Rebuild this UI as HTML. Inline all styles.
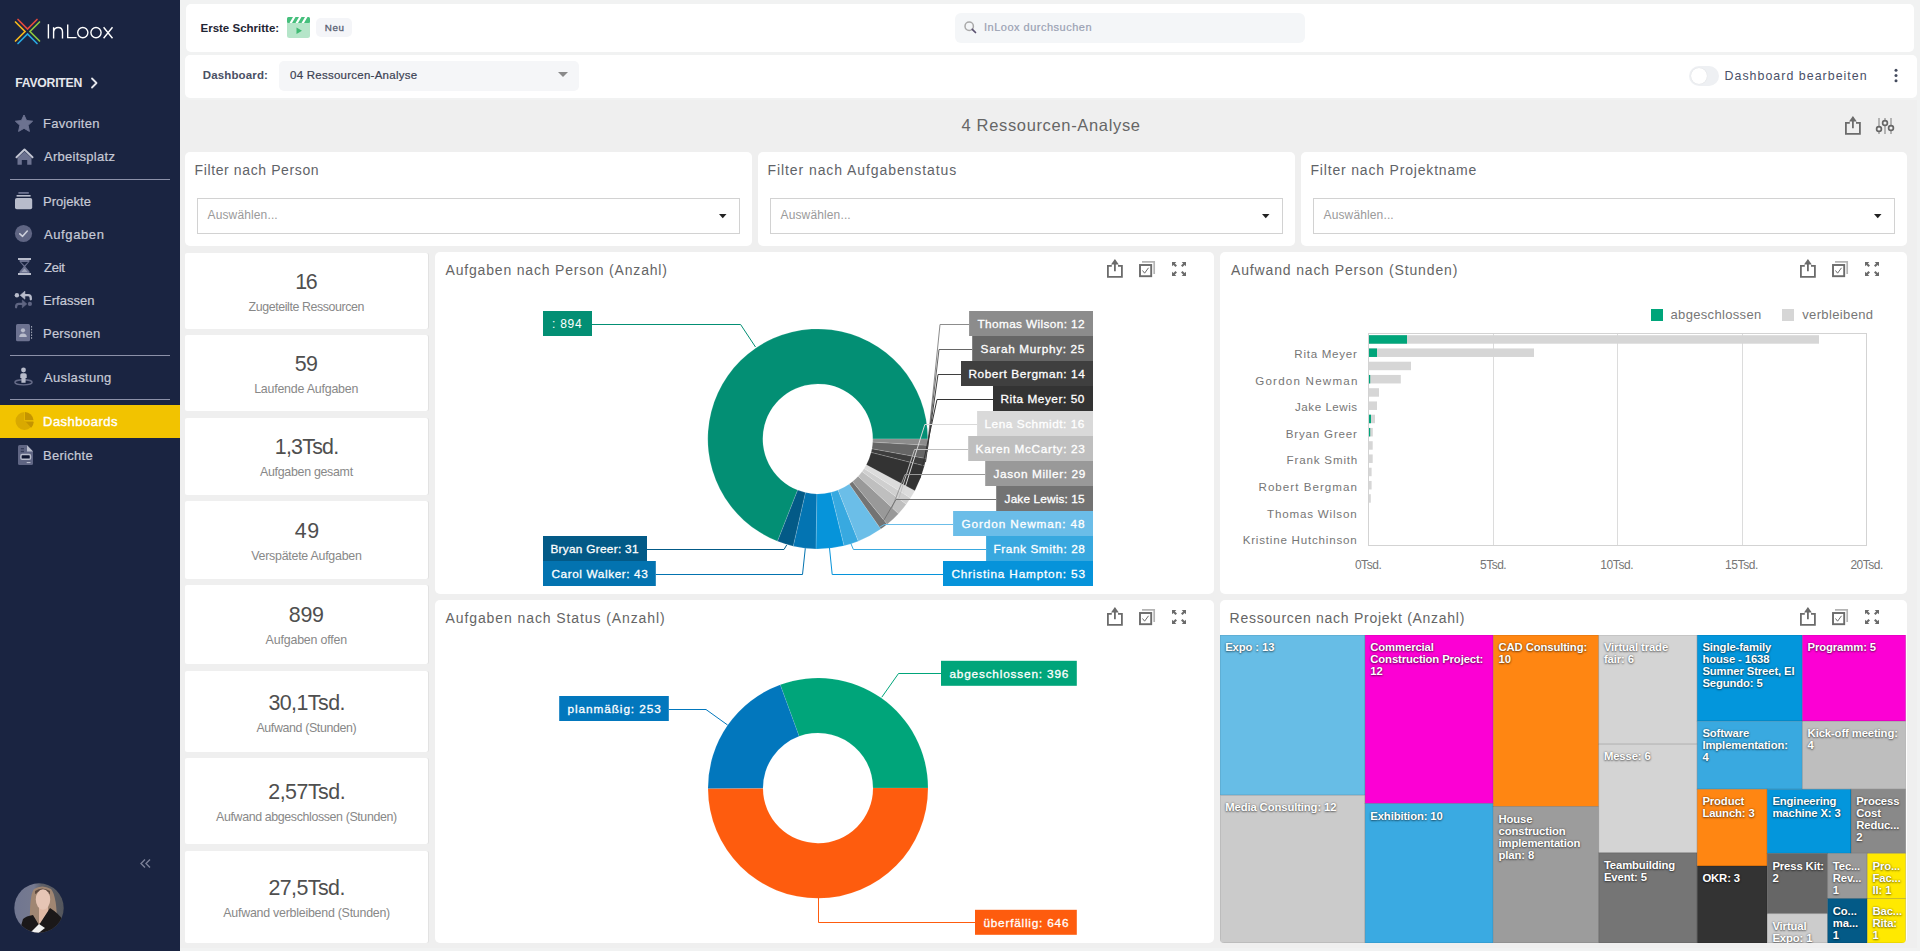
<!DOCTYPE html>
<html><head><meta charset="utf-8"><title>InLoox Dashboard</title>
<style>
html,body{margin:0;padding:0;}
body{width:1920px;height:951px;overflow:hidden;position:relative;background:#efefef;font-family:"Liberation Sans",sans-serif;}
svg{position:absolute;overflow:visible}
</style></head><body>
<div style="position:absolute;left:0px;top:0px;width:180px;height:951px;background:#1a2441;border-radius:0px;"></div>
<div style="position:absolute;left:180px;top:0px;width:1740px;height:100px;background:#f1f2f2;border-radius:0px;"></div>
<div style="position:absolute;left:1917px;top:0px;width:3px;height:951px;background:#f1f2f2;border-radius:0px;"></div>
<div style="position:absolute;left:180px;top:948px;width:1740px;height:3px;background:#f1f2f2;border-radius:0px;"></div>
<svg style="left:0;top:0" width="60" height="60" viewBox="0 0 60 60">
<g fill="none" stroke-width="1.7" stroke-linecap="round">
<polyline points="18,19.5 27.5,29 37,19.5" stroke="#e5493d"/>
<polyline points="15.5,22 25,31.5 15.5,41" stroke="#f5b81c"/>
<polyline points="39.5,22 30,31.5 39.5,41" stroke="#8dc63f"/>
<polyline points="18,43.5 27.5,34 37,43.5" stroke="#29a8e0"/>
</g></svg>
<svg style="left:0;top:0" width="130" height="50"><g fill="none" stroke="#ffffff" stroke-width="1.4" stroke-linecap="butt">
<line x1="48.4" y1="24.2" x2="48.4" y2="38.5"/>
<path d="M53.6,38.5 L53.6,27.2 M53.6,31.5 Q54.5,27.5 58.1,27.5 Q62.5,27.5 62.5,32 L62.5,38.5"/>
<path d="M67.7,24.4 L67.7,37.6 L76.6,37.6"/>
<circle cx="82.8" cy="32.6" r="5.1"/>
<circle cx="96" cy="32.6" r="5.1"/>
<path d="M103.6,27.2 L112.5,38.2 M112.5,27.2 L103.6,38.2"/>
</g></svg>
<svg style="left:0;top:0" width="120" height="100"><polyline points="92,78.5 96.5,83 92,87.5" fill="none" stroke="#e6e7ec" stroke-width="1.8" stroke-linecap="round" stroke-linejoin="round"/></svg>
<div style="position:absolute;left:0px;top:405px;width:180px;height:33px;background:#f2c300;border-radius:0px;"></div>
<div style="position:absolute;left:10px;top:179px;width:160px;height:1px;background:#8c91a9;border-radius:0px;"></div>
<div style="position:absolute;left:10px;top:355px;width:160px;height:1px;background:#8c91a9;border-radius:0px;"></div>
<div style="position:absolute;left:10px;top:399px;width:160px;height:1px;background:#8c91a9;border-radius:0px;"></div>
<svg style="left:0;top:0" width="180" height="480">
<!-- star -->
<path d="M24,115 L26.6,120.6 L32.6,121.2 L28.1,125.3 L29.4,131.4 L24,128.3 L18.6,131.4 L19.9,125.3 L15.4,121.2 L21.4,120.6 Z" fill="#6c7290" stroke="#6c7290" stroke-width="1" stroke-linejoin="round"/>
<!-- home -->
<path d="M16.5,157.2 L24.5,149.5 L32.5,157.2" fill="none" stroke="#c3c6d3" stroke-width="2" stroke-linecap="round" stroke-linejoin="round"/>
<path d="M17.5,158 L24.5,151.5 L31.5,158 L31.5,164.8 L27.2,164.8 L27.2,160 L21.8,160 L21.8,164.8 L17.5,164.8 Z" fill="#6c7290"/>
<!-- projekte -->
<rect x="15" y="198" width="17.2" height="11.3" rx="1.8" fill="#b8bccb"/>
<rect x="16.6" y="195" width="14" height="1.6" fill="#b8bccb"/>
<rect x="18.4" y="192" width="10.4" height="1.8" fill="#6c7290"/>
<!-- aufgaben -->
<circle cx="23.5" cy="233.5" r="8.6" fill="#5f6583"/>
<polyline points="19.8,233.8 22.6,236.3 27.3,231" fill="none" stroke="#cdd0db" stroke-width="1.6" stroke-linecap="round" stroke-linejoin="round"/>
<!-- zeit -->
<rect x="18" y="258" width="13" height="2" fill="#b8bccb"/>
<rect x="18" y="273" width="13" height="2" fill="#b8bccb"/>
<path d="M19.5,260 L29.5,260 L29.5,261.5 L25.3,266.5 L29.5,271.5 L29.5,273 L19.5,273 L19.5,271.5 L23.7,266.5 L19.5,261.5 Z" fill="#6c7290"/>
<path d="M21,262 L28,262 L24.5,265.5 Z" fill="#1a2441"/>
<path d="M21.3,272 L27.7,272 L24.5,268.5 Z" fill="#9ba0b6"/>
<!-- erfassen -->
<circle cx="16.9" cy="295.3" r="2.2" fill="#b8bccb"/>
<path d="M23.5,295.2 L28.2,295.2 Q30.8,295.2 30.8,298.2 L30.8,299.3" fill="none" stroke="#b8bccb" stroke-width="2.3" stroke-linecap="round"/>
<path d="M20.2,295.2 L24.9,291.2 L24.9,299.2 Z" fill="#b8bccb" stroke="#b8bccb" stroke-width="0.6" stroke-linejoin="round"/>
<circle cx="29.9" cy="303.9" r="2.1" fill="#5f6582"/>
<path d="M23.3,303.9 L18.8,303.9 Q16.1,303.9 16.1,306.7 L16.1,307.3" fill="none" stroke="#5f6582" stroke-width="2.3" stroke-linecap="round"/>
<path d="M26.8,303.9 L22.3,300 L22.3,307.8 Z" fill="#5f6582" stroke="#5f6582" stroke-width="0.6" stroke-linejoin="round"/>
<!-- personen -->
<rect x="16" y="324" width="14" height="17.2" rx="1.5" fill="#6c7290"/>
<circle cx="23" cy="330.3" r="2.1" fill="#b8bccb"/>
<path d="M19.2,337 Q19.2,333.5 23,333.5 Q26.8,333.5 26.8,337 Z" fill="#b8bccb"/>
<line x1="31.6" y1="326" x2="31.6" y2="339.5" stroke="#b8bccb" stroke-width="0.9" stroke-dasharray="1.6,1.2"/>
<!-- auslastung -->
<ellipse cx="23.5" cy="382.3" rx="8.6" ry="2.6" fill="none" stroke="#676c89" stroke-width="1.4"/>
<circle cx="23.5" cy="370" r="2.4" fill="#b8bccb"/>
<path d="M20.3,375 Q20.3,373.2 22.1,373.2 L24.9,373.2 Q26.7,373.2 26.7,375 L26.7,378 L25.6,378 L25.6,382.8 L21.4,382.8 L21.4,378 L20.3,378 Z" fill="#b8bccb"/>
<!-- dashboards pie -->
<path d="M24.5,414 L24.5,421 L33.5,421 A9,9 0 1 1 24.5,412" fill="#d9a900" />
<path d="M25,412 A9,9 0 0 1 33.5,420.3 L25,420.3 Z" fill="#c49400"/>
<path d="M26,422 L33.7,422 A9,9 0 0 1 31.2,427.8 Z" fill="#c49400"/>
<!-- berichte -->
<path d="M19.6,445 L27,445 L33,451.3 L33,463.5 Q33,465 31.5,465 L19.6,465 Q18,465 18,463.5 L18,446.6 Q18,445 19.6,445 Z" fill="#5f6583"/>
<path d="M27,445.2 L33,451.5 L27,451.5 Z" fill="#b8bccb"/>
<rect x="20.8" y="448" width="3.2" height="1.4" fill="#1a2441" opacity="0.6"/>
<rect x="20.8" y="450.8" width="3.2" height="1.4" fill="#1a2441" opacity="0.6"/>
<rect x="20.9" y="454.5" width="9.6" height="4.8" rx="1.4" fill="#0f1631" stroke="#b8bccb" stroke-width="1.5"/>
<rect x="26.7" y="462" width="3.8" height="1.1" fill="#b8bccb"/>
</svg>
<svg style="left:0;top:840" width="180" height="40"><g fill="none" stroke="#7b8097" stroke-width="1.4"><polyline points="145,19.5 141,23.5 145,27.5"/><polyline points="150,19.5 146,23.5 150,27.5"/></g></svg>
<svg style="left:14px;top:883px" width="50" height="50" viewBox="0 0 50 50">
<defs><clipPath id="avc"><circle cx="25" cy="25" r="24.7"/></clipPath>
<linearGradient id="avbg" x1="0" x2="1" y1="0" y2="0"><stop offset="0" stop-color="#707690"/><stop offset="0.4" stop-color="#767a90"/><stop offset="0.55" stop-color="#5e6068"/><stop offset="1" stop-color="#54565c"/></linearGradient></defs>
<g clip-path="url(#avc)">
<rect width="50" height="50" fill="url(#avbg)"/>
<path d="M16,46 Q15,12 20,6 Q28,1 37,6 Q43,13 43,42 L16,46 Z" fill="#a08672"/>
<path d="M21,8 Q28,3 36,8 L36,11 Q28,7 21,11 Z" fill="#5e4a40"/>
<rect x="25" y="24" width="9" height="16" fill="#dfb8a4"/>
<ellipse cx="29" cy="16.5" rx="7.2" ry="10.3" fill="#e6c5b5"/>
<path d="M5,50 L9,36 Q12,33 19,32 L25,42 L36,25 Q44,30 50,38 L50,50 Z" fill="#1b1819"/>
<path d="M16,50 L25,41 L31,45 L22,52 Z" fill="#f0f0f0"/>
</g></svg>
<div style="position:absolute;left:186px;top:4px;width:1728px;height:48px;background:#ffffff;border-radius:5px;"></div>
<div style="position:absolute;left:185px;top:55px;width:1732px;height:43px;background:#ffffff;border-radius:5px;"></div>
<svg style="left:287px;top:17px" width="24" height="22" viewBox="0 0 24 22">
<rect x="0" y="0" width="23" height="21" rx="2.5" fill="#b5e5c9"/>
<rect x="0" y="0" width="23" height="6" rx="1.5" fill="#45bf7c"/>
<path d="M2.5,6 L6,0 L8.5,0 L5,6 Z M8.5,6 L12,0 L14.5,0 L11,6 Z M14.5,6 L18,0 L20.5,0 L17,6 Z" fill="#ffffff"/>
<path d="M9.5,10.5 L15,13.7 L9.5,17 Z" fill="#3fba73"/>
</svg>
<div style="position:absolute;left:316px;top:18px;width:36px;height:19px;background:#f4f5f8;border-radius:5px;"></div>
<div style="position:absolute;left:955px;top:13px;width:350px;height:30px;background:#f4f6f8;border-radius:6px;"></div>
<svg style="left:960px;top:17px" width="22" height="22"><circle cx="9.2" cy="9.2" r="4.2" fill="none" stroke="#a9a9a9" stroke-width="1.5"/><line x1="12.3" y1="12.3" x2="15.5" y2="15.5" stroke="#5a5170" stroke-width="1.7" stroke-linecap="round"/></svg>
<div style="position:absolute;left:279px;top:61px;width:300px;height:30px;background:#f5f6f8;border-radius:5px;"></div>
<svg style="left:550px;top:65px" width="30" height="20"><path d="M8,7 L18,7 L13,12 Z" fill="#8a8a8a"/></svg>
<div style="position:absolute;left:1689px;top:66px;width:30px;height:20px;background:#eef0f3;border-radius:10px;"></div>
<div style="position:absolute;left:1691px;top:68px;width:16px;height:16px;border-radius:8px;background:#fff;box-shadow:0 0 1px rgba(0,0,0,0.15)"></div>
<svg style="left:1890px;top:65px" width="12" height="20"><circle cx="6" cy="5.2" r="1.5" fill="#444b5e"/><circle cx="6" cy="10.5" r="1.5" fill="#444b5e"/><circle cx="6" cy="15.8" r="1.5" fill="#444b5e"/></svg>
<svg style="left:1843px;top:113px" width="22" height="24" viewBox="0 0 22 24"><g fill="none" stroke="#6b6b6b" stroke-width="1.8">
<polyline points="6.8,9.9 2.9,9.9 2.9,20.9 16.9,20.9 16.9,9.9 13,9.9"/><line x1="9.9" y1="4.5" x2="9.9" y2="15.2"/></g>
<path d="M6,8.5 L9.9,3 L13.8,8.5 Z" fill="#6b6b6b"/></svg>
<svg style="left:1870px;top:110px" width="30" height="30"><g stroke="#a5a5a5" stroke-width="1.6"><line x1="9" y1="8" x2="9" y2="24"/><line x1="15" y1="8" x2="15" y2="24"/><line x1="21" y1="8" x2="21" y2="24"/></g>
<g fill="#f0f0f0" stroke="#666" stroke-width="1.7"><circle cx="9" cy="19" r="2.4"/><circle cx="15" cy="13" r="2.4"/><circle cx="21" cy="18" r="2.4"/></g></svg>
<div style="position:absolute;left:185px;top:152px;width:567px;height:93.5px;background:#ffffff;border-radius:5px;"></div>
<div style="position:absolute;left:197px;top:198px;width:541px;height:34px;border:1px solid #d2d2d2;background:#fff"></div>
<svg style="left:716px;top:208px" width="16" height="16"><path d="M3,6 L10.5,6 L6.75,10.3 Z" fill="#222"/></svg>
<div style="position:absolute;left:758px;top:152px;width:537px;height:93.5px;background:#ffffff;border-radius:5px;"></div>
<div style="position:absolute;left:770px;top:198px;width:510.5px;height:34px;border:1px solid #d2d2d2;background:#fff"></div>
<svg style="left:1258.5px;top:208px" width="16" height="16"><path d="M3,6 L10.5,6 L6.75,10.3 Z" fill="#222"/></svg>
<div style="position:absolute;left:1301px;top:152px;width:606px;height:93.5px;background:#ffffff;border-radius:5px;"></div>
<div style="position:absolute;left:1313px;top:198px;width:579.5px;height:34px;border:1px solid #d2d2d2;background:#fff"></div>
<svg style="left:1870.5px;top:208px" width="16" height="16"><path d="M3,6 L10.5,6 L6.75,10.3 Z" fill="#222"/></svg>
<div style="position:absolute;left:185px;top:253px;width:243px;height:76px;background:#ffffff;border-radius:2px;box-shadow:1px 0 0 #e2e2e2;"></div>
<div style="position:absolute;left:185px;top:335px;width:243px;height:76px;background:#ffffff;border-radius:2px;box-shadow:1px 0 0 #e2e2e2;"></div>
<div style="position:absolute;left:185px;top:418px;width:243px;height:76.5px;background:#ffffff;border-radius:2px;box-shadow:1px 0 0 #e2e2e2;"></div>
<div style="position:absolute;left:185px;top:501px;width:243px;height:77.5px;background:#ffffff;border-radius:2px;box-shadow:1px 0 0 #e2e2e2;"></div>
<div style="position:absolute;left:185px;top:584.5px;width:243px;height:79.5px;background:#ffffff;border-radius:2px;box-shadow:1px 0 0 #e2e2e2;"></div>
<div style="position:absolute;left:185px;top:670.7px;width:243px;height:81.29999999999995px;background:#ffffff;border-radius:2px;box-shadow:1px 0 0 #e2e2e2;"></div>
<div style="position:absolute;left:185px;top:758px;width:243px;height:86px;background:#ffffff;border-radius:2px;box-shadow:1px 0 0 #e2e2e2;"></div>
<div style="position:absolute;left:185px;top:851px;width:243px;height:92px;background:#ffffff;border-radius:2px;box-shadow:1px 0 0 #e2e2e2;"></div>
<div style="position:absolute;left:435px;top:252px;width:779px;height:342px;background:#ffffff;border-radius:5px;"></div>
<div style="position:absolute;left:1220px;top:252px;width:687px;height:342px;background:#ffffff;border-radius:5px;"></div>
<div style="position:absolute;left:435px;top:600px;width:779px;height:343px;background:#ffffff;border-radius:5px;"></div>
<div style="position:absolute;left:1220px;top:600px;width:687px;height:343px;background:#ffffff;border-radius:5px;"></div>
<svg style="left:1105px;top:256px" width="22" height="24" viewBox="0 0 22 24"><g fill="none" stroke="#6b6b6b" stroke-width="1.8">
<polyline points="6.8,9.9 2.9,9.9 2.9,20.9 16.9,20.9 16.9,9.9 13,9.9"/><line x1="9.9" y1="4.5" x2="9.9" y2="15.2"/></g>
<path d="M6,8.5 L9.9,3 L13.8,8.5 Z" fill="#6b6b6b"/></svg>
<svg style="left:1139px;top:260px" width="20" height="20" viewBox="0 0 20 20">
<polyline points="3,1.8 15.2,1.8 15.2,14" fill="none" stroke="#b4b4b4" stroke-width="1.7"/>
<rect x="1" y="5" width="11.2" height="11.2" fill="none" stroke="#6b6b6b" stroke-width="1.9"/>
<polyline points="3.5,10.5 5.6,13.2 9.5,7.8" fill="none" stroke="#6b6b6b" stroke-width="1"/>
</svg>
<svg style="left:1172px;top:262px" width="16" height="16" viewBox="0 0 16 16"><g fill="#6b6b6b">
<path d="M0,0 L4.3,0 L2.9,1.4 L5,3.5 L3.5,5 L1.4,2.9 L0,4.3 Z"/>
<path d="M14,0 L9.7,0 L11.1,1.4 L9,3.5 L10.5,5 L12.6,2.9 L14,4.3 Z"/>
<path d="M0,14 L4.3,14 L2.9,12.6 L5,10.5 L3.5,9 L1.4,11.1 L0,9.7 Z"/>
<path d="M14,14 L9.7,14 L11.1,12.6 L9,10.5 L10.5,9 L12.6,11.1 L14,9.7 Z"/>
</g></svg>
<svg style="left:1798px;top:256px" width="22" height="24" viewBox="0 0 22 24"><g fill="none" stroke="#6b6b6b" stroke-width="1.8">
<polyline points="6.8,9.9 2.9,9.9 2.9,20.9 16.9,20.9 16.9,9.9 13,9.9"/><line x1="9.9" y1="4.5" x2="9.9" y2="15.2"/></g>
<path d="M6,8.5 L9.9,3 L13.8,8.5 Z" fill="#6b6b6b"/></svg>
<svg style="left:1832px;top:260px" width="20" height="20" viewBox="0 0 20 20">
<polyline points="3,1.8 15.2,1.8 15.2,14" fill="none" stroke="#b4b4b4" stroke-width="1.7"/>
<rect x="1" y="5" width="11.2" height="11.2" fill="none" stroke="#6b6b6b" stroke-width="1.9"/>
<polyline points="3.5,10.5 5.6,13.2 9.5,7.8" fill="none" stroke="#6b6b6b" stroke-width="1"/>
</svg>
<svg style="left:1865px;top:262px" width="16" height="16" viewBox="0 0 16 16"><g fill="#6b6b6b">
<path d="M0,0 L4.3,0 L2.9,1.4 L5,3.5 L3.5,5 L1.4,2.9 L0,4.3 Z"/>
<path d="M14,0 L9.7,0 L11.1,1.4 L9,3.5 L10.5,5 L12.6,2.9 L14,4.3 Z"/>
<path d="M0,14 L4.3,14 L2.9,12.6 L5,10.5 L3.5,9 L1.4,11.1 L0,9.7 Z"/>
<path d="M14,14 L9.7,14 L11.1,12.6 L9,10.5 L10.5,9 L12.6,11.1 L14,9.7 Z"/>
</g></svg>
<svg style="left:1105px;top:604px" width="22" height="24" viewBox="0 0 22 24"><g fill="none" stroke="#6b6b6b" stroke-width="1.8">
<polyline points="6.8,9.9 2.9,9.9 2.9,20.9 16.9,20.9 16.9,9.9 13,9.9"/><line x1="9.9" y1="4.5" x2="9.9" y2="15.2"/></g>
<path d="M6,8.5 L9.9,3 L13.8,8.5 Z" fill="#6b6b6b"/></svg>
<svg style="left:1139px;top:608px" width="20" height="20" viewBox="0 0 20 20">
<polyline points="3,1.8 15.2,1.8 15.2,14" fill="none" stroke="#b4b4b4" stroke-width="1.7"/>
<rect x="1" y="5" width="11.2" height="11.2" fill="none" stroke="#6b6b6b" stroke-width="1.9"/>
<polyline points="3.5,10.5 5.6,13.2 9.5,7.8" fill="none" stroke="#6b6b6b" stroke-width="1"/>
</svg>
<svg style="left:1172px;top:610px" width="16" height="16" viewBox="0 0 16 16"><g fill="#6b6b6b">
<path d="M0,0 L4.3,0 L2.9,1.4 L5,3.5 L3.5,5 L1.4,2.9 L0,4.3 Z"/>
<path d="M14,0 L9.7,0 L11.1,1.4 L9,3.5 L10.5,5 L12.6,2.9 L14,4.3 Z"/>
<path d="M0,14 L4.3,14 L2.9,12.6 L5,10.5 L3.5,9 L1.4,11.1 L0,9.7 Z"/>
<path d="M14,14 L9.7,14 L11.1,12.6 L9,10.5 L10.5,9 L12.6,11.1 L14,9.7 Z"/>
</g></svg>
<svg style="left:1798px;top:604px" width="22" height="24" viewBox="0 0 22 24"><g fill="none" stroke="#6b6b6b" stroke-width="1.8">
<polyline points="6.8,9.9 2.9,9.9 2.9,20.9 16.9,20.9 16.9,9.9 13,9.9"/><line x1="9.9" y1="4.5" x2="9.9" y2="15.2"/></g>
<path d="M6,8.5 L9.9,3 L13.8,8.5 Z" fill="#6b6b6b"/></svg>
<svg style="left:1832px;top:608px" width="20" height="20" viewBox="0 0 20 20">
<polyline points="3,1.8 15.2,1.8 15.2,14" fill="none" stroke="#b4b4b4" stroke-width="1.7"/>
<rect x="1" y="5" width="11.2" height="11.2" fill="none" stroke="#6b6b6b" stroke-width="1.9"/>
<polyline points="3.5,10.5 5.6,13.2 9.5,7.8" fill="none" stroke="#6b6b6b" stroke-width="1"/>
</svg>
<svg style="left:1865px;top:610px" width="16" height="16" viewBox="0 0 16 16"><g fill="#6b6b6b">
<path d="M0,0 L4.3,0 L2.9,1.4 L5,3.5 L3.5,5 L1.4,2.9 L0,4.3 Z"/>
<path d="M14,0 L9.7,0 L11.1,1.4 L9,3.5 L10.5,5 L12.6,2.9 L14,4.3 Z"/>
<path d="M0,14 L4.3,14 L2.9,12.6 L5,10.5 L3.5,9 L1.4,11.1 L0,9.7 Z"/>
<path d="M14,14 L9.7,14 L11.1,12.6 L9,10.5 L10.5,9 L12.6,11.1 L14,9.7 Z"/>
</g></svg>
<svg style="left:0;top:0" width="1920" height="951">
<path d="M927.80,438.90 A110,110 0 1 0 777.53,541.26 L797.66,490.08 A55,55 0 1 1 872.80,438.90 Z" fill="#038f74" stroke="#ffffff" stroke-width="0.5" stroke-opacity="0.3"/>
<path d="M777.53,541.26 A110,110 0 0 0 793.32,546.14 L805.56,492.52 A55,55 0 0 1 797.66,490.08 Z" fill="#035a87" stroke="#ffffff" stroke-width="0.5" stroke-opacity="0.3"/>
<path d="M793.32,546.14 A110,110 0 0 0 816.07,548.89 L816.93,493.89 A55,55 0 0 1 805.56,492.52 Z" fill="#0374b2" stroke="#ffffff" stroke-width="0.5" stroke-opacity="0.3"/>
<path d="M816.07,548.89 A110,110 0 0 0 844.09,545.71 L830.95,492.31 A55,55 0 0 1 816.93,493.89 Z" fill="#0694da" stroke="#ffffff" stroke-width="0.5" stroke-opacity="0.3"/>
<path d="M844.09,545.71 A110,110 0 0 0 858.32,541.17 L838.06,490.03 A55,55 0 0 1 830.95,492.31 Z" fill="#38a9e0" stroke="#ffffff" stroke-width="0.5" stroke-opacity="0.3"/>
<path d="M858.32,541.17 A110,110 0 0 0 880.83,529.05 L849.31,483.98 A55,55 0 0 1 838.06,490.03 Z" fill="#6bbee8" stroke="#ffffff" stroke-width="0.5" stroke-opacity="0.3"/>
<path d="M880.83,529.05 A110,110 0 0 0 887.22,524.23 L852.51,481.57 A55,55 0 0 1 849.31,483.98 Z" fill="#737373" stroke="#ffffff" stroke-width="0.5" stroke-opacity="0.3"/>
<path d="M887.22,524.23 A110,110 0 0 0 898.50,513.65 L858.15,476.28 A55,55 0 0 1 852.51,481.57 Z" fill="#999999" stroke="#ffffff" stroke-width="0.5" stroke-opacity="0.3"/>
<path d="M898.50,513.65 A110,110 0 0 0 906.32,504.20 L862.06,471.55 A55,55 0 0 1 858.15,476.28 Z" fill="#bfbfbf" stroke="#ffffff" stroke-width="0.5" stroke-opacity="0.3"/>
<path d="M906.32,504.20 A110,110 0 0 0 910.55,498.04 L864.17,468.47 A55,55 0 0 1 862.06,471.55 Z" fill="#cfcfcf" stroke="#ffffff" stroke-width="0.5" stroke-opacity="0.3"/>
<path d="M910.55,498.04 A110,110 0 0 0 914.85,490.67 L866.33,464.79 A55,55 0 0 1 864.17,468.47 Z" fill="#dcdcdc" stroke="#ffffff" stroke-width="0.5" stroke-opacity="0.3"/>
<path d="M914.85,490.67 A110,110 0 0 0 924.45,465.84 L871.12,452.37 A55,55 0 0 1 866.33,464.79 Z" fill="#333333" stroke="#ffffff" stroke-width="0.5" stroke-opacity="0.3"/>
<path d="M924.45,465.84 A110,110 0 0 0 926.03,458.54 L871.92,448.72 A55,55 0 0 1 871.12,452.37 Z" fill="#3d3d3d" stroke="#ffffff" stroke-width="0.5" stroke-opacity="0.3"/>
<path d="M926.03,458.54 A110,110 0 0 0 927.61,445.30 L872.71,442.10 A55,55 0 0 1 871.92,448.72 Z" fill="#666666" stroke="#ffffff" stroke-width="0.5" stroke-opacity="0.3"/>
<path d="M927.61,445.30 A110,110 0 0 0 927.80,438.90 L872.80,438.90 A55,55 0 0 1 872.71,442.10 Z" fill="#8c8c8c" stroke="#ffffff" stroke-width="0.5" stroke-opacity="0.3"/>
<polyline points="969.1,324.5 940,324.5 928,442" fill="none" stroke="#8c8c8c" stroke-width="1"/>
<polyline points="972.2,349.5 939,349.5 927,452" fill="none" stroke="#666666" stroke-width="1"/>
<polyline points="961,374.5 938,374.5 925.5,462" fill="none" stroke="#3f3f3f" stroke-width="1"/>
<polyline points="993,399.5 937,399.5 920,478" fill="none" stroke="#333333" stroke-width="1"/>
<polyline points="977.1,424.5 924.8,424.5 903,494" fill="none" stroke="#d9d9d9" stroke-width="1"/>
<polyline points="968.2,449.5 914.5,449.5 895,510" fill="none" stroke="#bfbfbf" stroke-width="1"/>
<polyline points="985.2,474.5 905,474.5 888,518" fill="none" stroke="#999999" stroke-width="1"/>
<polyline points="996.2,499.5 896,499.5 881,525" fill="none" stroke="#737373" stroke-width="1"/>
<polyline points="953.1,524.5 884.3,524.5 879.4,527.4" fill="none" stroke="#6bbde8" stroke-width="1"/>
<polyline points="986.1,549.5 853.4,549.5 850,541.5" fill="none" stroke="#38a8df" stroke-width="1"/>
<polyline points="943,574.5 832.2,574.5 829.5,548" fill="none" stroke="#0693da" stroke-width="1"/>
<rect x="969.1" y="311" width="123.9" height="25" fill="#8c8c8c"/>
<rect x="972.2" y="336" width="120.8" height="25" fill="#666666"/>
<rect x="961" y="361" width="132.0" height="25" fill="#3f3f3f"/>
<rect x="993" y="386" width="100.0" height="25" fill="#333333"/>
<rect x="977.1" y="411" width="115.9" height="25" fill="#d9d9d9"/>
<rect x="968.2" y="436" width="124.8" height="25" fill="#bfbfbf"/>
<rect x="985.2" y="461" width="107.8" height="25" fill="#999999"/>
<rect x="996.2" y="486" width="96.8" height="25" fill="#737373"/>
<rect x="953.1" y="511" width="139.9" height="25" fill="#6bbde8"/>
<rect x="986.1" y="536" width="106.9" height="25" fill="#38a8df"/>
<rect x="943" y="561" width="150.0" height="25" fill="#0693da"/>
<polyline points="592,324.5 740.6,324.5 755.5,347" fill="none" stroke="#038f74" stroke-width="1"/>
<rect x="543" y="311" width="49.0" height="25" fill="#038f74"/>
<polyline points="647,549.5 784,549.5 786.7,545" fill="none" stroke="#035a87" stroke-width="1"/>
<rect x="543" y="536" width="104.0" height="25" fill="#035a87"/>
<polyline points="655.8,574.5 802.5,574.5 805.3,548.3" fill="none" stroke="#0373b0" stroke-width="1"/>
<rect x="543" y="561" width="112.8" height="25" fill="#0373b0"/>
<line x1="1493.5" y1="333.5" x2="1493.5" y2="545.5" stroke="#dcdcdc" stroke-width="1"/>
<line x1="1617.5" y1="333.5" x2="1617.5" y2="545.5" stroke="#dcdcdc" stroke-width="1"/>
<line x1="1742.5" y1="333.5" x2="1742.5" y2="545.5" stroke="#dcdcdc" stroke-width="1"/>
<rect x="1368.5" y="333.5" width="498.0" height="212.0" fill="none" stroke="#d3d3d3" stroke-width="1"/>
<rect x="1369" y="335.20" width="450.00" height="8.5" fill="#d6d6d6"/>
<rect x="1369" y="335.20" width="38.00" height="8.5" fill="#00a57a"/>
<rect x="1369" y="348.45" width="165.00" height="8.5" fill="#d6d6d6"/>
<rect x="1369" y="348.45" width="8.00" height="8.5" fill="#00a57a"/>
<rect x="1369" y="361.70" width="42.00" height="8.5" fill="#d6d6d6"/>
<rect x="1369" y="374.95" width="31.80" height="8.5" fill="#d6d6d6"/>
<rect x="1369" y="374.95" width="1.20" height="8.5" fill="#00a57a"/>
<rect x="1369" y="388.20" width="10.00" height="8.5" fill="#d6d6d6"/>
<rect x="1369" y="401.45" width="8.00" height="8.5" fill="#d6d6d6"/>
<rect x="1369" y="414.70" width="6.00" height="8.5" fill="#d6d6d6"/>
<rect x="1369" y="414.70" width="2.00" height="8.5" fill="#00a57a"/>
<rect x="1369" y="427.95" width="3.80" height="8.5" fill="#d6d6d6"/>
<rect x="1369" y="427.95" width="1.20" height="8.5" fill="#00a57a"/>
<rect x="1369" y="441.20" width="3.70" height="8.5" fill="#d6d6d6"/>
<rect x="1369" y="454.45" width="3.70" height="8.5" fill="#d6d6d6"/>
<rect x="1369" y="467.70" width="2.60" height="8.5" fill="#d6d6d6"/>
<rect x="1369" y="480.95" width="2.60" height="8.5" fill="#d6d6d6"/>
<rect x="1369" y="494.20" width="1.80" height="8.5" fill="#d6d6d6"/>
<rect x="1651" y="309" width="12" height="12" fill="#00a57a"/>
<rect x="1782" y="309" width="12" height="12" fill="#d6d6d6"/>
<path d="M928.00,788.00 A110,110 0 0 0 780.22,684.69 L799.11,736.34 A55,55 0 0 1 873.00,788.00 Z" fill="#00a57a" stroke="#ffffff" stroke-width="0.3" stroke-opacity="0.3"/>
<path d="M780.22,684.69 A110,110 0 0 0 708.00,788.80 L763.00,788.40 A55,55 0 0 1 799.11,736.34 Z" fill="#0277bd" stroke="#ffffff" stroke-width="0.3" stroke-opacity="0.3"/>
<path d="M708.00,788.80 A110,110 0 0 0 928.00,788.00 L873.00,788.00 A55,55 0 0 1 763.00,788.40 Z" fill="#fe5c0e" stroke="#ffffff" stroke-width="0.3" stroke-opacity="0.3"/>
<polyline points="941,673.5 898.5,673.5 881.8,697.2" fill="none" stroke="#00a57a" stroke-width="1"/>
<rect x="941" y="660.8" width="135.8" height="25" fill="#00a57a"/>
<polyline points="668.8,709.5 706,709.5 727.6,725" fill="none" stroke="#0277bd" stroke-width="1"/>
<rect x="559.2" y="696" width="109.6" height="25" fill="#0277bd"/>
<polyline points="818.5,897.5 818.5,922.5 975,922.5" fill="none" stroke="#fe5c0e" stroke-width="1"/>
<rect x="975" y="909.8" width="101.8" height="25" fill="#fe5c0e"/>
</svg>
<div style="position:absolute;left:1220px;top:635px;width:686px;height:308px;overflow:hidden;border-radius:0 0 4px 4px">
<svg style="left:0;top:0" width="686" height="308"><rect x="0.00" y="0.00" width="145.10" height="160.30" fill="#67bde6" stroke="#000" stroke-opacity="0.14" stroke-width="1"/><rect x="0.00" y="160.30" width="145.10" height="147.70" fill="#cbcbcb" stroke="#000" stroke-opacity="0.14" stroke-width="1"/><rect x="145.10" y="0.00" width="128.20" height="168.50" fill="#fc00d4" stroke="#000" stroke-opacity="0.14" stroke-width="1"/><rect x="145.10" y="168.50" width="128.20" height="139.50" fill="#3aaae2" stroke="#000" stroke-opacity="0.14" stroke-width="1"/><rect x="273.30" y="0.00" width="105.40" height="171.50" fill="#ff8612" stroke="#000" stroke-opacity="0.14" stroke-width="1"/><rect x="273.30" y="171.50" width="105.40" height="136.50" fill="#9c9c9c" stroke="#000" stroke-opacity="0.14" stroke-width="1"/><rect x="378.70" y="0.00" width="98.50" height="109.20" fill="#d4d4d4" stroke="#000" stroke-opacity="0.14" stroke-width="1"/><rect x="378.70" y="109.20" width="98.50" height="108.60" fill="#d4d4d4" stroke="#000" stroke-opacity="0.14" stroke-width="1"/><rect x="378.70" y="217.80" width="98.50" height="90.20" fill="#757575" stroke="#000" stroke-opacity="0.14" stroke-width="1"/><rect x="477.20" y="0.00" width="105.20" height="86.20" fill="#0396dc" stroke="#000" stroke-opacity="0.14" stroke-width="1"/><rect x="582.40" y="0.00" width="103.30" height="86.20" fill="#fc00d4" stroke="#000" stroke-opacity="0.14" stroke-width="1"/><rect x="477.20" y="86.20" width="105.20" height="68.10" fill="#39a9e0" stroke="#000" stroke-opacity="0.14" stroke-width="1"/><rect x="582.40" y="86.20" width="103.30" height="68.10" fill="#bebebe" stroke="#000" stroke-opacity="0.14" stroke-width="1"/><rect x="477.20" y="154.30" width="70.00" height="76.70" fill="#ff8612" stroke="#000" stroke-opacity="0.14" stroke-width="1"/><rect x="477.20" y="231.00" width="70.00" height="77.00" fill="#333333" stroke="#000" stroke-opacity="0.14" stroke-width="1"/><rect x="547.20" y="154.30" width="83.80" height="64.10" fill="#0396dc" stroke="#000" stroke-opacity="0.14" stroke-width="1"/><rect x="631.00" y="154.30" width="54.70" height="64.10" fill="#898989" stroke="#000" stroke-opacity="0.14" stroke-width="1"/><rect x="547.20" y="218.40" width="60.40" height="60.20" fill="#666666" stroke="#000" stroke-opacity="0.14" stroke-width="1"/><rect x="547.20" y="278.60" width="60.40" height="29.40" fill="#cccccc" stroke="#000" stroke-opacity="0.14" stroke-width="1"/><rect x="607.60" y="218.40" width="39.70" height="45.10" fill="#999999" stroke="#000" stroke-opacity="0.14" stroke-width="1"/><rect x="607.60" y="263.50" width="39.70" height="44.50" fill="#035a87" stroke="#000" stroke-opacity="0.14" stroke-width="1"/><rect x="647.30" y="218.40" width="38.40" height="45.10" fill="#ffe900" stroke="#000" stroke-opacity="0.14" stroke-width="1"/><rect x="647.30" y="263.50" width="38.40" height="44.50" fill="#ffe900" stroke="#000" stroke-opacity="0.14" stroke-width="1"/></svg>
</div>
<span style="position:absolute;left:15.20px;top:76.87px;font-size:12.2px;line-height:12.2px;font-weight:700;color:#e6e7ec;letter-spacing:-0.213px;white-space:pre;">FAVORITEN</span>
<span style="position:absolute;left:43.00px;top:116.80px;font-size:13px;line-height:13px;font-weight:400;color:#c7cad6;letter-spacing:0.287px;white-space:pre;-webkit-text-stroke:0.2px #c7cad6">Favoriten</span>
<span style="position:absolute;left:44.00px;top:149.60px;font-size:13px;line-height:13px;font-weight:400;color:#c7cad6;letter-spacing:0.273px;white-space:pre;-webkit-text-stroke:0.2px #c7cad6">Arbeitsplatz</span>
<span style="position:absolute;left:43.00px;top:194.80px;font-size:13px;line-height:13px;font-weight:400;color:#c7cad6;letter-spacing:0.043px;white-space:pre;-webkit-text-stroke:0.2px #c7cad6">Projekte</span>
<span style="position:absolute;left:44.00px;top:227.90px;font-size:13px;line-height:13px;font-weight:400;color:#c7cad6;letter-spacing:0.600px;white-space:pre;-webkit-text-stroke:0.2px #c7cad6">Aufgaben</span>
<span style="position:absolute;left:44.00px;top:260.80px;font-size:13px;line-height:13px;font-weight:400;color:#c7cad6;letter-spacing:-0.233px;white-space:pre;-webkit-text-stroke:0.2px #c7cad6">Zeit</span>
<span style="position:absolute;left:43.00px;top:293.60px;font-size:13px;line-height:13px;font-weight:400;color:#c7cad6;letter-spacing:0.043px;white-space:pre;-webkit-text-stroke:0.2px #c7cad6">Erfassen</span>
<span style="position:absolute;left:43.00px;top:326.60px;font-size:13px;line-height:13px;font-weight:400;color:#c7cad6;letter-spacing:0.214px;white-space:pre;-webkit-text-stroke:0.2px #c7cad6">Personen</span>
<span style="position:absolute;left:44.00px;top:370.80px;font-size:13px;line-height:13px;font-weight:400;color:#c7cad6;letter-spacing:0.333px;white-space:pre;-webkit-text-stroke:0.2px #c7cad6">Auslastung</span>
<span style="position:absolute;left:43.00px;top:414.60px;font-size:13px;line-height:13px;font-weight:400;color:#ffffff;letter-spacing:0.500px;white-space:pre;-webkit-text-stroke:0.4px #ffffff">Dashboards</span>
<span style="position:absolute;left:43.00px;top:448.60px;font-size:13px;line-height:13px;font-weight:400;color:#c7cad6;letter-spacing:0.286px;white-space:pre;-webkit-text-stroke:0.2px #c7cad6">Berichte</span>
<span style="position:absolute;left:200.50px;top:23.07px;font-size:11.5px;line-height:11.5px;font-weight:700;color:#1f2533;letter-spacing:0.000px;white-space:pre;">Erste Schritte:</span>
<span style="position:absolute;left:324.70px;top:22.70px;font-size:9.8px;line-height:9.8px;font-weight:400;color:#586073;letter-spacing:0.650px;white-space:pre;-webkit-text-stroke:0.3px #586073">Neu</span>
<span style="position:absolute;left:984.00px;top:21.69px;font-size:11px;line-height:11px;font-weight:400;color:#9aa1b3;letter-spacing:0.500px;white-space:pre;-webkit-text-stroke:0.2px #9aa1b3">InLoox durchsuchen</span>
<span style="position:absolute;left:202.80px;top:70.27px;font-size:11.5px;line-height:11.5px;font-weight:700;color:#4a5064;letter-spacing:0.133px;white-space:pre;">Dashboard:</span>
<span style="position:absolute;left:290.00px;top:70.27px;font-size:11.5px;line-height:11.5px;font-weight:400;color:#3c4253;letter-spacing:0.250px;white-space:pre;-webkit-text-stroke:0.2px #3c4253">04 Ressourcen-Analyse</span>
<span style="position:absolute;left:1724.50px;top:70.30px;font-size:12.4px;line-height:12.4px;font-weight:400;color:#4a5068;letter-spacing:1.026px;white-space:pre;">Dashboard bearbeiten</span>
<span style="position:absolute;left:961.50px;top:116.63px;font-size:16.5px;line-height:16.5px;font-weight:400;color:#666666;letter-spacing:0.658px;white-space:pre;">4 Ressourcen-Analyse</span>
<span style="position:absolute;left:194.50px;top:162.95px;font-size:14px;line-height:14px;font-weight:400;color:#5f6368;letter-spacing:0.618px;white-space:pre;">Filter nach Person</span>
<span style="position:absolute;left:207.50px;top:209.24px;font-size:12px;line-height:12px;font-weight:400;color:#9a9a9a;letter-spacing:0.136px;white-space:pre;">Auswählen...</span>
<span style="position:absolute;left:767.50px;top:162.95px;font-size:14px;line-height:14px;font-weight:400;color:#5f6368;letter-spacing:0.920px;white-space:pre;">Filter nach Aufgabenstatus</span>
<span style="position:absolute;left:780.50px;top:209.24px;font-size:12px;line-height:12px;font-weight:400;color:#9a9a9a;letter-spacing:0.136px;white-space:pre;">Auswählen...</span>
<span style="position:absolute;left:1310.50px;top:162.95px;font-size:14px;line-height:14px;font-weight:400;color:#5f6368;letter-spacing:0.818px;white-space:pre;">Filter nach Projektname</span>
<span style="position:absolute;left:1323.50px;top:209.24px;font-size:12px;line-height:12px;font-weight:400;color:#9a9a9a;letter-spacing:0.136px;white-space:pre;">Auswählen...</span>
<span style="position:absolute;left:295.25px;top:272.18px;font-size:21.4px;line-height:21.4px;font-weight:400;color:#4f4f4f;letter-spacing:-1.500px;white-space:pre;">16</span>
<span style="position:absolute;left:248.60px;top:301.20px;font-size:12.4px;line-height:12.4px;font-weight:400;color:#888888;letter-spacing:-0.410px;white-space:pre;">Zugeteilte Ressourcen</span>
<span style="position:absolute;left:294.80px;top:354.18px;font-size:21.4px;line-height:21.4px;font-weight:400;color:#4f4f4f;letter-spacing:-0.600px;white-space:pre;">59</span>
<span style="position:absolute;left:254.15px;top:383.20px;font-size:12.4px;line-height:12.4px;font-weight:400;color:#888888;letter-spacing:-0.206px;white-space:pre;">Laufende Aufgaben</span>
<span style="position:absolute;left:274.85px;top:437.43px;font-size:21.4px;line-height:21.4px;font-weight:400;color:#4f4f4f;letter-spacing:-0.783px;white-space:pre;">1,3Tsd.</span>
<span style="position:absolute;left:260.05px;top:466.45px;font-size:12.4px;line-height:12.4px;font-weight:400;color:#888888;letter-spacing:-0.293px;white-space:pre;">Aufgaben gesamt</span>
<span style="position:absolute;left:294.75px;top:520.93px;font-size:21.4px;line-height:21.4px;font-weight:400;color:#4f4f4f;letter-spacing:0.500px;white-space:pre;">49</span>
<span style="position:absolute;left:251.25px;top:549.95px;font-size:12.4px;line-height:12.4px;font-weight:400;color:#888888;letter-spacing:-0.250px;white-space:pre;">Verspätete Aufgaben</span>
<span style="position:absolute;left:288.70px;top:605.43px;font-size:21.4px;line-height:21.4px;font-weight:400;color:#4f4f4f;letter-spacing:-0.200px;white-space:pre;">899</span>
<span style="position:absolute;left:265.60px;top:634.45px;font-size:12.4px;line-height:12.4px;font-weight:400;color:#888888;letter-spacing:-0.169px;white-space:pre;">Aufgaben offen</span>
<span style="position:absolute;left:268.40px;top:692.53px;font-size:21.4px;line-height:21.4px;font-weight:400;color:#4f4f4f;letter-spacing:-0.543px;white-space:pre;">30,1Tsd.</span>
<span style="position:absolute;left:256.40px;top:721.55px;font-size:12.4px;line-height:12.4px;font-weight:400;color:#888888;letter-spacing:-0.362px;white-space:pre;">Aufwand (Stunden)</span>
<span style="position:absolute;left:268.25px;top:782.18px;font-size:21.4px;line-height:21.4px;font-weight:400;color:#4f4f4f;letter-spacing:-0.500px;white-space:pre;">2,57Tsd.</span>
<span style="position:absolute;left:216.10px;top:811.20px;font-size:12.4px;line-height:12.4px;font-weight:400;color:#888888;letter-spacing:-0.373px;white-space:pre;">Aufwand abgeschlossen (Stunden)</span>
<span style="position:absolute;left:268.45px;top:878.18px;font-size:21.4px;line-height:21.4px;font-weight:400;color:#4f4f4f;letter-spacing:-0.557px;white-space:pre;">27,5Tsd.</span>
<span style="position:absolute;left:223.35px;top:907.20px;font-size:12.4px;line-height:12.4px;font-weight:400;color:#888888;letter-spacing:-0.239px;white-space:pre;">Aufwand verbleibend (Stunden)</span>
<span style="position:absolute;left:445.50px;top:263.15px;font-size:14px;line-height:14px;font-weight:400;color:#656565;letter-spacing:0.821px;white-space:pre;">Aufgaben nach Person (Anzahl)</span>
<span style="position:absolute;left:1231.00px;top:263.15px;font-size:14px;line-height:14px;font-weight:400;color:#656565;letter-spacing:0.857px;white-space:pre;">Aufwand nach Person (Stunden)</span>
<span style="position:absolute;left:445.50px;top:610.95px;font-size:14px;line-height:14px;font-weight:400;color:#656565;letter-spacing:0.907px;white-space:pre;">Aufgaben nach Status (Anzahl)</span>
<span style="position:absolute;left:1229.60px;top:611.15px;font-size:14px;line-height:14px;font-weight:400;color:#656565;letter-spacing:0.719px;white-space:pre;">Ressourcen nach Projekt (Anzahl)</span>
<span style="position:absolute;left:977.50px;top:318.71px;font-size:11.8px;line-height:11.8px;font-weight:400;color:#ffffff;letter-spacing:0.381px;white-space:pre;-webkit-text-stroke:0.3px #fff">Thomas Wilson: 12</span>
<span style="position:absolute;left:980.60px;top:343.71px;font-size:11.8px;line-height:11.8px;font-weight:400;color:#ffffff;letter-spacing:0.667px;white-space:pre;-webkit-text-stroke:0.3px #fff">Sarah Murphy: 25</span>
<span style="position:absolute;left:968.40px;top:368.71px;font-size:11.8px;line-height:11.8px;font-weight:400;color:#ffffff;letter-spacing:0.600px;white-space:pre;-webkit-text-stroke:0.3px #fff">Robert Bergman: 14</span>
<span style="position:absolute;left:1000.40px;top:393.71px;font-size:11.8px;line-height:11.8px;font-weight:400;color:#ffffff;letter-spacing:0.554px;white-space:pre;-webkit-text-stroke:0.3px #fff">Rita Meyer: 50</span>
<span style="position:absolute;left:984.50px;top:418.71px;font-size:11.8px;line-height:11.8px;font-weight:400;color:#ffffff;letter-spacing:0.540px;white-space:pre;-webkit-text-stroke:0.3px #fff">Lena Schmidt: 16</span>
<span style="position:absolute;left:975.60px;top:443.71px;font-size:11.8px;line-height:11.8px;font-weight:400;color:#ffffff;letter-spacing:0.687px;white-space:pre;-webkit-text-stroke:0.3px #fff">Karen McCarty: 23</span>
<span style="position:absolute;left:993.60px;top:468.71px;font-size:11.8px;line-height:11.8px;font-weight:400;color:#ffffff;letter-spacing:0.600px;white-space:pre;-webkit-text-stroke:0.3px #fff">Jason Miller: 29</span>
<span style="position:absolute;left:1004.60px;top:493.71px;font-size:11.8px;line-height:11.8px;font-weight:400;color:#ffffff;letter-spacing:0.154px;white-space:pre;-webkit-text-stroke:0.3px #fff">Jake Lewis: 15</span>
<span style="position:absolute;left:961.50px;top:518.71px;font-size:11.8px;line-height:11.8px;font-weight:400;color:#ffffff;letter-spacing:0.881px;white-space:pre;-webkit-text-stroke:0.3px #fff">Gordon Newman: 48</span>
<span style="position:absolute;left:993.50px;top:543.71px;font-size:11.8px;line-height:11.8px;font-weight:400;color:#ffffff;letter-spacing:0.579px;white-space:pre;-webkit-text-stroke:0.3px #fff">Frank Smith: 28</span>
<span style="position:absolute;left:951.40px;top:568.71px;font-size:11.8px;line-height:11.8px;font-weight:400;color:#ffffff;letter-spacing:0.810px;white-space:pre;-webkit-text-stroke:0.3px #fff">Christina Hampton: 53</span>
<span style="position:absolute;left:552.00px;top:317.84px;font-size:12px;line-height:12px;font-weight:400;color:#ffffff;letter-spacing:0.750px;white-space:pre;">: 894</span>
<span style="position:absolute;left:550.40px;top:543.71px;font-size:11.8px;line-height:11.8px;font-weight:400;color:#ffffff;letter-spacing:0.300px;white-space:pre;-webkit-text-stroke:0.3px #fff">Bryan Greer: 31</span>
<span style="position:absolute;left:551.40px;top:568.71px;font-size:11.8px;line-height:11.8px;font-weight:400;color:#ffffff;letter-spacing:0.600px;white-space:pre;-webkit-text-stroke:0.3px #fff">Carol Walker: 43</span>
<span style="position:absolute;left:1670.50px;top:308.40px;font-size:13px;line-height:13px;font-weight:400;color:#767676;letter-spacing:0.333px;white-space:pre;">abgeschlossen</span>
<span style="position:absolute;left:1802.20px;top:308.40px;font-size:13px;line-height:13px;font-weight:400;color:#767676;letter-spacing:0.370px;white-space:pre;">verbleibend</span>
<span style="position:absolute;left:1294.30px;top:347.78px;font-size:11.6px;line-height:11.6px;font-weight:400;color:#767676;letter-spacing:0.722px;white-space:pre;">Rita Meyer</span>
<span style="position:absolute;left:1255.20px;top:374.98px;font-size:11.6px;line-height:11.6px;font-weight:400;color:#767676;letter-spacing:1.217px;white-space:pre;">Gordon Newman</span>
<span style="position:absolute;left:1295.00px;top:400.88px;font-size:11.6px;line-height:11.6px;font-weight:400;color:#767676;letter-spacing:0.533px;white-space:pre;">Jake Lewis</span>
<span style="position:absolute;left:1285.80px;top:427.88px;font-size:11.6px;line-height:11.6px;font-weight:400;color:#767676;letter-spacing:0.800px;white-space:pre;">Bryan Greer</span>
<span style="position:absolute;left:1286.60px;top:453.78px;font-size:11.6px;line-height:11.6px;font-weight:400;color:#767676;letter-spacing:0.820px;white-space:pre;">Frank Smith</span>
<span style="position:absolute;left:1258.50px;top:480.88px;font-size:11.6px;line-height:11.6px;font-weight:400;color:#767676;letter-spacing:1.023px;white-space:pre;">Robert Bergman</span>
<span style="position:absolute;left:1267.10px;top:507.68px;font-size:11.6px;line-height:11.6px;font-weight:400;color:#767676;letter-spacing:0.808px;white-space:pre;">Thomas Wilson</span>
<span style="position:absolute;left:1242.70px;top:533.78px;font-size:11.6px;line-height:11.6px;font-weight:400;color:#767676;letter-spacing:0.783px;white-space:pre;">Kristine Hutchinson</span>
<span style="position:absolute;left:1354.90px;top:558.64px;font-size:12px;line-height:12px;font-weight:400;color:#767676;letter-spacing:-0.450px;white-space:pre;">0Tsd.</span>
<span style="position:absolute;left:1480.00px;top:558.64px;font-size:12px;line-height:12px;font-weight:400;color:#767676;letter-spacing:-0.500px;white-space:pre;">5Tsd.</span>
<span style="position:absolute;left:1600.30px;top:558.64px;font-size:12px;line-height:12px;font-weight:400;color:#767676;letter-spacing:-0.400px;white-space:pre;">10Tsd.</span>
<span style="position:absolute;left:1725.00px;top:558.64px;font-size:12px;line-height:12px;font-weight:400;color:#767676;letter-spacing:-0.400px;white-space:pre;">15Tsd.</span>
<span style="position:absolute;left:1850.45px;top:558.64px;font-size:12px;line-height:12px;font-weight:400;color:#767676;letter-spacing:-0.500px;white-space:pre;">20Tsd.</span>
<span style="position:absolute;left:949.40px;top:668.51px;font-size:11.8px;line-height:11.8px;font-weight:400;color:#ffffff;letter-spacing:0.824px;white-space:pre;-webkit-text-stroke:0.3px #fff">abgeschlossen: 396</span>
<span style="position:absolute;left:567.60px;top:703.71px;font-size:11.8px;line-height:11.8px;font-weight:400;color:#ffffff;letter-spacing:0.908px;white-space:pre;-webkit-text-stroke:0.3px #fff">planmäßig: 253</span>
<span style="position:absolute;left:983.40px;top:917.51px;font-size:11.8px;line-height:11.8px;font-weight:400;color:#ffffff;letter-spacing:0.786px;white-space:pre;-webkit-text-stroke:0.3px #fff">überfällig: 646</span>
<span style="position:absolute;left:1225.20px;top:642.13px;font-size:11.3px;line-height:11.3px;font-weight:700;color:#ffffff;letter-spacing:-0.120px;white-space:pre;text-shadow:0 0 2px rgba(0,0,0,0.45), 0 1px 2px rgba(0,0,0,0.45);">Expo : 13</span>
<span style="position:absolute;left:1225.20px;top:802.43px;font-size:11.3px;line-height:11.3px;font-weight:700;color:#ffffff;letter-spacing:-0.120px;white-space:pre;text-shadow:0 0 2px rgba(0,0,0,0.45), 0 1px 2px rgba(0,0,0,0.45);">Media Consulting: 12</span>
<span style="position:absolute;left:1370.30px;top:642.13px;font-size:11.3px;line-height:11.3px;font-weight:700;color:#ffffff;letter-spacing:-0.120px;white-space:pre;text-shadow:0 0 2px rgba(0,0,0,0.45), 0 1px 2px rgba(0,0,0,0.45);">Commercial</span>
<span style="position:absolute;left:1370.30px;top:654.13px;font-size:11.3px;line-height:11.3px;font-weight:700;color:#ffffff;letter-spacing:-0.120px;white-space:pre;text-shadow:0 0 2px rgba(0,0,0,0.45), 0 1px 2px rgba(0,0,0,0.45);">Construction Project:</span>
<span style="position:absolute;left:1370.30px;top:666.13px;font-size:11.3px;line-height:11.3px;font-weight:700;color:#ffffff;letter-spacing:-0.120px;white-space:pre;text-shadow:0 0 2px rgba(0,0,0,0.45), 0 1px 2px rgba(0,0,0,0.45);">12</span>
<span style="position:absolute;left:1370.30px;top:810.63px;font-size:11.3px;line-height:11.3px;font-weight:700;color:#ffffff;letter-spacing:-0.120px;white-space:pre;text-shadow:0 0 2px rgba(0,0,0,0.45), 0 1px 2px rgba(0,0,0,0.45);">Exhibition: 10</span>
<span style="position:absolute;left:1498.50px;top:642.13px;font-size:11.3px;line-height:11.3px;font-weight:700;color:#ffffff;letter-spacing:-0.120px;white-space:pre;text-shadow:0 0 2px rgba(0,0,0,0.45), 0 1px 2px rgba(0,0,0,0.45);">CAD Consulting:</span>
<span style="position:absolute;left:1498.50px;top:654.13px;font-size:11.3px;line-height:11.3px;font-weight:700;color:#ffffff;letter-spacing:-0.120px;white-space:pre;text-shadow:0 0 2px rgba(0,0,0,0.45), 0 1px 2px rgba(0,0,0,0.45);">10</span>
<span style="position:absolute;left:1498.50px;top:813.63px;font-size:11.3px;line-height:11.3px;font-weight:700;color:#ffffff;letter-spacing:-0.120px;white-space:pre;text-shadow:0 0 2px rgba(0,0,0,0.45), 0 1px 2px rgba(0,0,0,0.45);">House</span>
<span style="position:absolute;left:1498.50px;top:825.63px;font-size:11.3px;line-height:11.3px;font-weight:700;color:#ffffff;letter-spacing:-0.120px;white-space:pre;text-shadow:0 0 2px rgba(0,0,0,0.45), 0 1px 2px rgba(0,0,0,0.45);">construction</span>
<span style="position:absolute;left:1498.50px;top:837.63px;font-size:11.3px;line-height:11.3px;font-weight:700;color:#ffffff;letter-spacing:-0.120px;white-space:pre;text-shadow:0 0 2px rgba(0,0,0,0.45), 0 1px 2px rgba(0,0,0,0.45);">implementation</span>
<span style="position:absolute;left:1498.50px;top:849.63px;font-size:11.3px;line-height:11.3px;font-weight:700;color:#ffffff;letter-spacing:-0.120px;white-space:pre;text-shadow:0 0 2px rgba(0,0,0,0.45), 0 1px 2px rgba(0,0,0,0.45);">plan: 8</span>
<span style="position:absolute;left:1603.90px;top:642.13px;font-size:11.3px;line-height:11.3px;font-weight:700;color:#ffffff;letter-spacing:-0.120px;white-space:pre;text-shadow:0 0 2px rgba(0,0,0,0.45), 0 1px 2px rgba(0,0,0,0.45);">Virtual trade</span>
<span style="position:absolute;left:1603.90px;top:654.13px;font-size:11.3px;line-height:11.3px;font-weight:700;color:#ffffff;letter-spacing:-0.120px;white-space:pre;text-shadow:0 0 2px rgba(0,0,0,0.45), 0 1px 2px rgba(0,0,0,0.45);">fair: 6</span>
<span style="position:absolute;left:1603.90px;top:751.33px;font-size:11.3px;line-height:11.3px;font-weight:700;color:#ffffff;letter-spacing:-0.120px;white-space:pre;text-shadow:0 0 2px rgba(0,0,0,0.45), 0 1px 2px rgba(0,0,0,0.45);">Messe: 6</span>
<span style="position:absolute;left:1603.90px;top:859.93px;font-size:11.3px;line-height:11.3px;font-weight:700;color:#ffffff;letter-spacing:-0.120px;white-space:pre;text-shadow:0 0 2px rgba(0,0,0,0.45), 0 1px 2px rgba(0,0,0,0.45);">Teambuilding</span>
<span style="position:absolute;left:1603.90px;top:871.93px;font-size:11.3px;line-height:11.3px;font-weight:700;color:#ffffff;letter-spacing:-0.120px;white-space:pre;text-shadow:0 0 2px rgba(0,0,0,0.45), 0 1px 2px rgba(0,0,0,0.45);">Event: 5</span>
<span style="position:absolute;left:1702.40px;top:642.13px;font-size:11.3px;line-height:11.3px;font-weight:700;color:#ffffff;letter-spacing:-0.120px;white-space:pre;text-shadow:0 0 2px rgba(0,0,0,0.45), 0 1px 2px rgba(0,0,0,0.45);">Single-family</span>
<span style="position:absolute;left:1702.40px;top:654.13px;font-size:11.3px;line-height:11.3px;font-weight:700;color:#ffffff;letter-spacing:-0.120px;white-space:pre;text-shadow:0 0 2px rgba(0,0,0,0.45), 0 1px 2px rgba(0,0,0,0.45);">house - 1638</span>
<span style="position:absolute;left:1702.40px;top:666.13px;font-size:11.3px;line-height:11.3px;font-weight:700;color:#ffffff;letter-spacing:-0.120px;white-space:pre;text-shadow:0 0 2px rgba(0,0,0,0.45), 0 1px 2px rgba(0,0,0,0.45);">Sumner Street, El</span>
<span style="position:absolute;left:1702.40px;top:678.13px;font-size:11.3px;line-height:11.3px;font-weight:700;color:#ffffff;letter-spacing:-0.120px;white-space:pre;text-shadow:0 0 2px rgba(0,0,0,0.45), 0 1px 2px rgba(0,0,0,0.45);">Segundo: 5</span>
<span style="position:absolute;left:1807.60px;top:642.13px;font-size:11.3px;line-height:11.3px;font-weight:700;color:#ffffff;letter-spacing:-0.120px;white-space:pre;text-shadow:0 0 2px rgba(0,0,0,0.45), 0 1px 2px rgba(0,0,0,0.45);">Programm: 5</span>
<span style="position:absolute;left:1702.40px;top:728.33px;font-size:11.3px;line-height:11.3px;font-weight:700;color:#ffffff;letter-spacing:-0.120px;white-space:pre;text-shadow:0 0 2px rgba(0,0,0,0.45), 0 1px 2px rgba(0,0,0,0.45);">Software</span>
<span style="position:absolute;left:1702.40px;top:740.33px;font-size:11.3px;line-height:11.3px;font-weight:700;color:#ffffff;letter-spacing:-0.120px;white-space:pre;text-shadow:0 0 2px rgba(0,0,0,0.45), 0 1px 2px rgba(0,0,0,0.45);">Implementation:</span>
<span style="position:absolute;left:1702.40px;top:752.33px;font-size:11.3px;line-height:11.3px;font-weight:700;color:#ffffff;letter-spacing:-0.120px;white-space:pre;text-shadow:0 0 2px rgba(0,0,0,0.45), 0 1px 2px rgba(0,0,0,0.45);">4</span>
<span style="position:absolute;left:1807.60px;top:728.33px;font-size:11.3px;line-height:11.3px;font-weight:700;color:#ffffff;letter-spacing:-0.120px;white-space:pre;text-shadow:0 0 2px rgba(0,0,0,0.45), 0 1px 2px rgba(0,0,0,0.45);">Kick-off meeting:</span>
<span style="position:absolute;left:1807.60px;top:740.33px;font-size:11.3px;line-height:11.3px;font-weight:700;color:#ffffff;letter-spacing:-0.120px;white-space:pre;text-shadow:0 0 2px rgba(0,0,0,0.45), 0 1px 2px rgba(0,0,0,0.45);">4</span>
<span style="position:absolute;left:1702.40px;top:796.43px;font-size:11.3px;line-height:11.3px;font-weight:700;color:#ffffff;letter-spacing:-0.120px;white-space:pre;text-shadow:0 0 2px rgba(0,0,0,0.45), 0 1px 2px rgba(0,0,0,0.45);">Product</span>
<span style="position:absolute;left:1702.40px;top:808.43px;font-size:11.3px;line-height:11.3px;font-weight:700;color:#ffffff;letter-spacing:-0.120px;white-space:pre;text-shadow:0 0 2px rgba(0,0,0,0.45), 0 1px 2px rgba(0,0,0,0.45);">Launch: 3</span>
<span style="position:absolute;left:1702.40px;top:873.13px;font-size:11.3px;line-height:11.3px;font-weight:700;color:#ffffff;letter-spacing:-0.120px;white-space:pre;text-shadow:0 0 2px rgba(0,0,0,0.45), 0 1px 2px rgba(0,0,0,0.45);">OKR: 3</span>
<span style="position:absolute;left:1772.40px;top:796.43px;font-size:11.3px;line-height:11.3px;font-weight:700;color:#ffffff;letter-spacing:-0.120px;white-space:pre;text-shadow:0 0 2px rgba(0,0,0,0.45), 0 1px 2px rgba(0,0,0,0.45);">Engineering</span>
<span style="position:absolute;left:1772.40px;top:808.43px;font-size:11.3px;line-height:11.3px;font-weight:700;color:#ffffff;letter-spacing:-0.120px;white-space:pre;text-shadow:0 0 2px rgba(0,0,0,0.45), 0 1px 2px rgba(0,0,0,0.45);">machine X: 3</span>
<span style="position:absolute;left:1856.20px;top:796.43px;font-size:11.3px;line-height:11.3px;font-weight:700;color:#ffffff;letter-spacing:-0.120px;white-space:pre;text-shadow:0 0 2px rgba(0,0,0,0.45), 0 1px 2px rgba(0,0,0,0.45);">Process</span>
<span style="position:absolute;left:1856.20px;top:808.43px;font-size:11.3px;line-height:11.3px;font-weight:700;color:#ffffff;letter-spacing:-0.120px;white-space:pre;text-shadow:0 0 2px rgba(0,0,0,0.45), 0 1px 2px rgba(0,0,0,0.45);">Cost</span>
<span style="position:absolute;left:1856.20px;top:820.43px;font-size:11.3px;line-height:11.3px;font-weight:700;color:#ffffff;letter-spacing:-0.120px;white-space:pre;text-shadow:0 0 2px rgba(0,0,0,0.45), 0 1px 2px rgba(0,0,0,0.45);">Reduc...</span>
<span style="position:absolute;left:1856.20px;top:832.43px;font-size:11.3px;line-height:11.3px;font-weight:700;color:#ffffff;letter-spacing:-0.120px;white-space:pre;text-shadow:0 0 2px rgba(0,0,0,0.45), 0 1px 2px rgba(0,0,0,0.45);">2</span>
<span style="position:absolute;left:1772.40px;top:860.53px;font-size:11.3px;line-height:11.3px;font-weight:700;color:#ffffff;letter-spacing:-0.120px;white-space:pre;text-shadow:0 0 2px rgba(0,0,0,0.45), 0 1px 2px rgba(0,0,0,0.45);">Press Kit:</span>
<span style="position:absolute;left:1772.40px;top:872.53px;font-size:11.3px;line-height:11.3px;font-weight:700;color:#ffffff;letter-spacing:-0.120px;white-space:pre;text-shadow:0 0 2px rgba(0,0,0,0.45), 0 1px 2px rgba(0,0,0,0.45);">2</span>
<span style="position:absolute;left:1772.40px;top:920.73px;font-size:11.3px;line-height:11.3px;font-weight:700;color:#ffffff;letter-spacing:-0.120px;white-space:pre;text-shadow:0 0 2px rgba(0,0,0,0.45), 0 1px 2px rgba(0,0,0,0.45);">Virtual</span>
<span style="position:absolute;left:1772.40px;top:932.73px;font-size:11.3px;line-height:11.3px;font-weight:700;color:#ffffff;letter-spacing:-0.120px;white-space:pre;text-shadow:0 0 2px rgba(0,0,0,0.45), 0 1px 2px rgba(0,0,0,0.45);clip-path:inset(-3px -3px 1.03px -3px);">Expo: 1</span>
<span style="position:absolute;left:1832.80px;top:860.53px;font-size:11.3px;line-height:11.3px;font-weight:700;color:#ffffff;letter-spacing:-0.120px;white-space:pre;text-shadow:0 0 2px rgba(0,0,0,0.45), 0 1px 2px rgba(0,0,0,0.45);">Tec...</span>
<span style="position:absolute;left:1832.80px;top:872.53px;font-size:11.3px;line-height:11.3px;font-weight:700;color:#ffffff;letter-spacing:-0.120px;white-space:pre;text-shadow:0 0 2px rgba(0,0,0,0.45), 0 1px 2px rgba(0,0,0,0.45);">Rev...</span>
<span style="position:absolute;left:1832.80px;top:884.53px;font-size:11.3px;line-height:11.3px;font-weight:700;color:#ffffff;letter-spacing:-0.120px;white-space:pre;text-shadow:0 0 2px rgba(0,0,0,0.45), 0 1px 2px rgba(0,0,0,0.45);">1</span>
<span style="position:absolute;left:1832.80px;top:905.63px;font-size:11.3px;line-height:11.3px;font-weight:700;color:#ffffff;letter-spacing:-0.120px;white-space:pre;text-shadow:0 0 2px rgba(0,0,0,0.45), 0 1px 2px rgba(0,0,0,0.45);">Co...</span>
<span style="position:absolute;left:1832.80px;top:917.63px;font-size:11.3px;line-height:11.3px;font-weight:700;color:#ffffff;letter-spacing:-0.120px;white-space:pre;text-shadow:0 0 2px rgba(0,0,0,0.45), 0 1px 2px rgba(0,0,0,0.45);">ma...</span>
<span style="position:absolute;left:1832.80px;top:929.63px;font-size:11.3px;line-height:11.3px;font-weight:700;color:#ffffff;letter-spacing:-0.120px;white-space:pre;text-shadow:0 0 2px rgba(0,0,0,0.45), 0 1px 2px rgba(0,0,0,0.45);">1</span>
<span style="position:absolute;left:1872.50px;top:860.53px;font-size:11.3px;line-height:11.3px;font-weight:700;color:#ffffff;letter-spacing:-0.120px;white-space:pre;text-shadow:0 0 2px rgba(0,0,0,0.45), 0 1px 2px rgba(0,0,0,0.45);">Pro...</span>
<span style="position:absolute;left:1872.50px;top:872.53px;font-size:11.3px;line-height:11.3px;font-weight:700;color:#ffffff;letter-spacing:-0.120px;white-space:pre;text-shadow:0 0 2px rgba(0,0,0,0.45), 0 1px 2px rgba(0,0,0,0.45);">Fac...</span>
<span style="position:absolute;left:1872.50px;top:884.53px;font-size:11.3px;line-height:11.3px;font-weight:700;color:#ffffff;letter-spacing:-0.120px;white-space:pre;text-shadow:0 0 2px rgba(0,0,0,0.45), 0 1px 2px rgba(0,0,0,0.45);">II: 1</span>
<span style="position:absolute;left:1872.50px;top:905.63px;font-size:11.3px;line-height:11.3px;font-weight:700;color:#ffffff;letter-spacing:-0.120px;white-space:pre;text-shadow:0 0 2px rgba(0,0,0,0.45), 0 1px 2px rgba(0,0,0,0.45);">Bac...</span>
<span style="position:absolute;left:1872.50px;top:917.63px;font-size:11.3px;line-height:11.3px;font-weight:700;color:#ffffff;letter-spacing:-0.120px;white-space:pre;text-shadow:0 0 2px rgba(0,0,0,0.45), 0 1px 2px rgba(0,0,0,0.45);">Rita:</span>
<span style="position:absolute;left:1872.50px;top:929.63px;font-size:11.3px;line-height:11.3px;font-weight:700;color:#ffffff;letter-spacing:-0.120px;white-space:pre;text-shadow:0 0 2px rgba(0,0,0,0.45), 0 1px 2px rgba(0,0,0,0.45);">1</span>
</body></html>
